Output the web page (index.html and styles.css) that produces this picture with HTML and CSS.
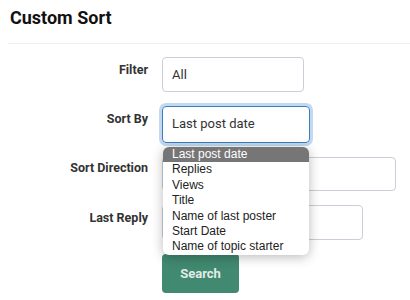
FILE: index.html
```html
<!DOCTYPE html>
<html lang="en">

<head>
    <meta charset="UTF-8">
    <meta name="viewport" content="width=device-width, initial-scale=1.0">
    <title>Custom Sort</title>
    <link rel="stylesheet" href="styles.css">
</head>

<body>
    <h2 class="title">Custom Sort</h2>
    <div class="divider"></div>
    <form class="sort-form">
        <label class="field-label">Filter</label>
        <div class="field"><div class="select select-filter">All</div></div>

        <label class="field-label">Sort By</label>
        <div class="field">
            <div class="select select-sort focused">Last post date</div>
            <ul class="options">
                <li class="option active">Last post date</li>
                <li class="option">Replies</li>
                <li class="option">Views</li>
                <li class="option">Title</li>
                <li class="option">Name of last poster</li>
                <li class="option">Start Date</li>
                <li class="option">Name of topic starter</li>
            </ul>
        </div>

        <label class="field-label label-direction">Sort Direction</label>
        <div class="field"><div class="select select-direction"></div></div>

        <label class="field-label">Last Reply</label>
        <div class="field"><div class="select select-reply"></div></div>

        <div></div>
        <div class="field"><button type="button" class="btn-search">Search</button></div>
    </form>
</body>

</html>
```

FILE: styles.css
```css
body {
    margin: 0;
    font-family: Roboto, "Liberation Sans", sans-serif;
    background: #fff;
    color: #333;
}

.title {
    margin: 0;
    padding: 7px 10px 0;
    font-size: 18px;
    font-weight: 700;
    line-height: 22px;
    color: #111;
}

.divider {
    margin: 14px 0 13px 8px;
    height: 1px;
    background: #eceef0;
}

.sort-form {
    display: grid;
    grid-template-columns: 148px auto;
    column-gap: 14px;
    row-gap: 14px;
    justify-items: start;
}

.field-label {
    justify-self: end;
    padding-top: 5px;
    font-size: 12.5px;
    font-weight: 700;
    color: #333;
}

.label-direction {
    padding-top: 3px;
}

.field {
    position: relative;
}

.select {
    box-sizing: border-box;
    height: 35px;
    padding: 0 9px;
    border: 1px solid #c9ced8;
    border-radius: 4px;
    font-size: 13px;
    line-height: 33px;
    color: #333;
    white-space: nowrap;
    overflow: hidden;
}

.select-filter {
    width: 142px;
}

.select-sort {
    width: 148px;
    height: 37px;
    line-height: 34px;
}

.select-direction {
    width: 234px;
    height: 34px;
}

.select-reply {
    width: 201px;
}

.focused {
    border-color: #3b7ec2;
    box-shadow: 0 0 0 3px rgba(120, 170, 220, 0.45);
}

.options {
    position: absolute;
    top: 41px;
    left: 1px;
    z-index: 5;
    width: 146px;
    margin: 0;
    padding: 0;
    list-style: none;
    background: #fff;
    border-radius: 6px;
    overflow: hidden;
    box-shadow: 0 2px 12px rgba(0, 0, 0, 0.28);
}

.option {
    padding: 0 9px;
    font-family: "Liberation Sans", Arial, sans-serif;
    font-size: 12px;
    line-height: 15.4px;
    color: #222;
    white-space: nowrap;
}

.option.active {
    background: #767676;
    color: #fff;
}

.btn-search {
    width: 77px;
    height: 39px;
    border: none;
    border-radius: 4px;
    background: #418970;
    color: #e2ebe7;
    font-family: inherit;
    font-size: 13px;
    font-weight: 700;
}
```
